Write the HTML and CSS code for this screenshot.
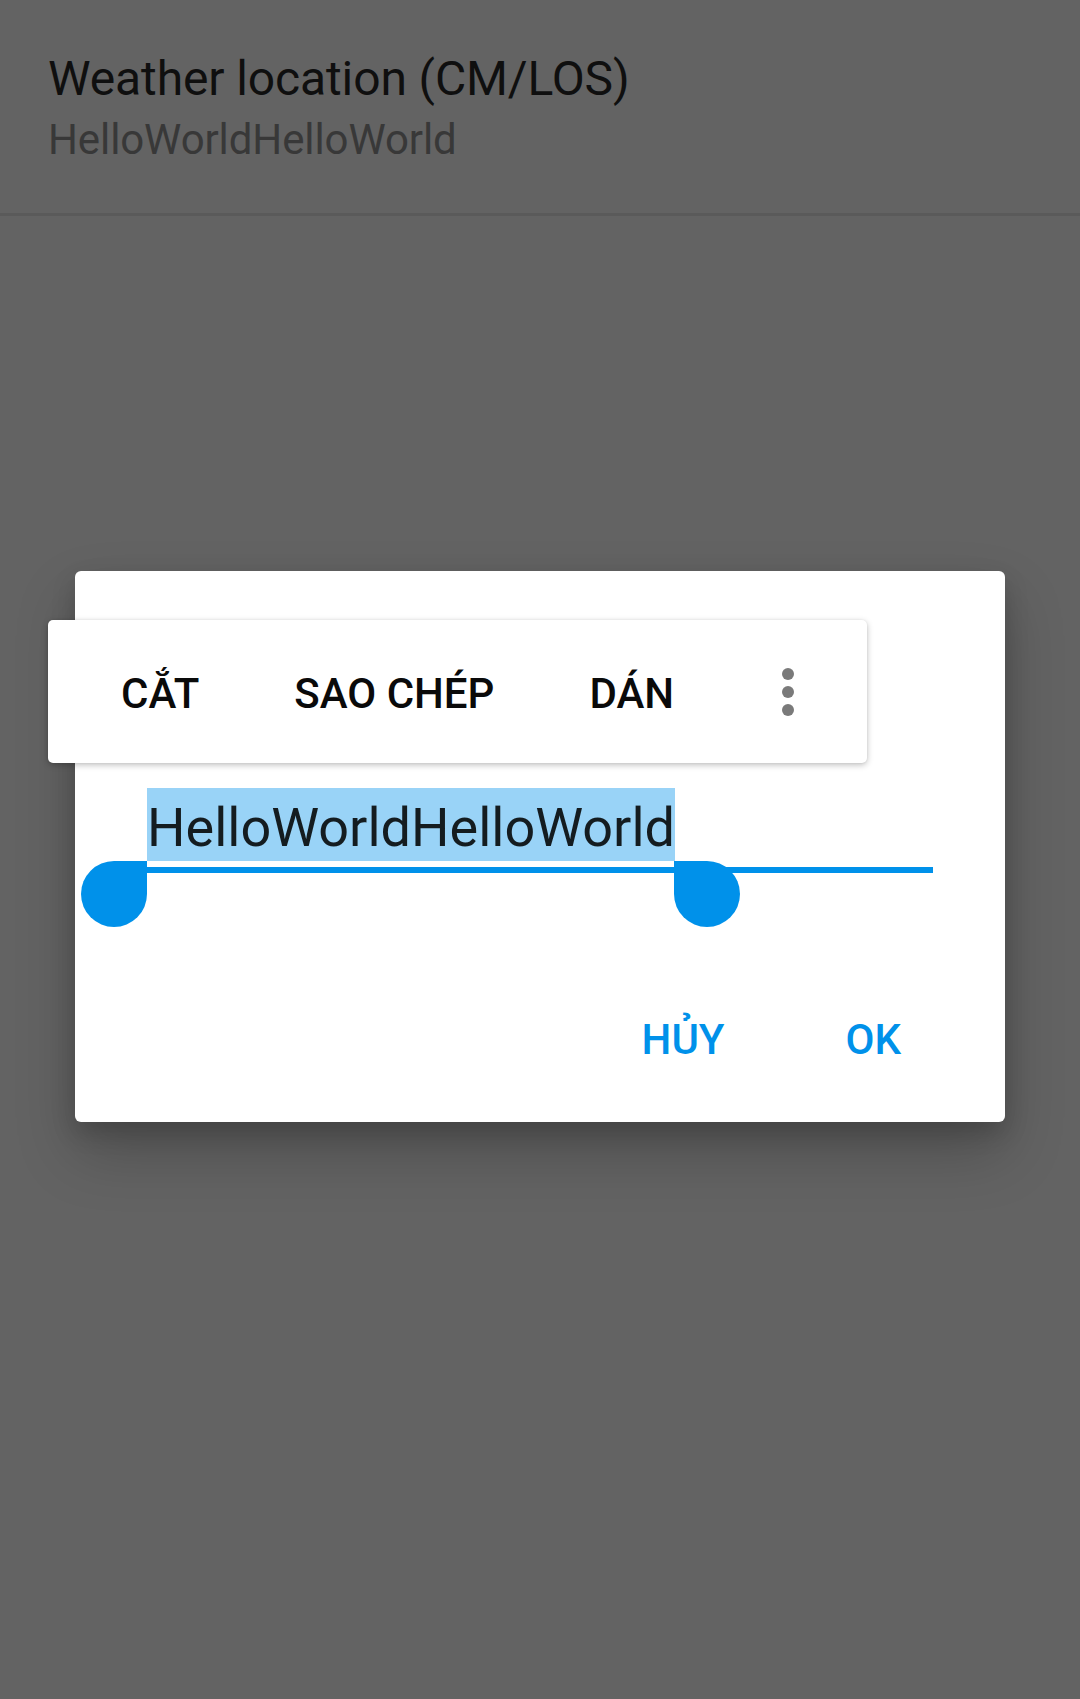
FILE: index.html
```html
<!DOCTYPE html>
<html lang="vi">
<head>
<meta charset="utf-8">
<title>Weather location</title>
<link rel="stylesheet" href="styles.css">
</head>
<body>
  <div class="screen">
    <div class="pref">
      <div class="pref-title">Weather location (CM/LOS)</div>
      <div class="pref-summary">HelloWorldHelloWorld</div>
    </div>

    <div class="dialog">
      <div class="field">
        <span class="selection">HelloWorldHelloWorld</span>
      </div>
      <div class="handle handle-left"></div>
      <div class="handle handle-right"></div>
      <div class="actions">
        <div class="action">HỦY</div>
        <div class="action">OK</div>
      </div>
    </div>

    <div class="toolbar">
      <div class="tb-item">CẮT</div>
      <div class="tb-item">SAO CHÉP</div>
      <div class="tb-item">DÁN</div>
      <div class="tb-more">
        <svg width="72" height="72" viewBox="0 0 72 72">
          <circle cx="36" cy="18" r="6" fill="#7a7a7a"/>
          <circle cx="36" cy="36" r="6" fill="#7a7a7a"/>
          <circle cx="36" cy="54" r="6" fill="#7a7a7a"/>
        </svg>
      </div>
    </div>
  </div>
</body>
</html>
```

FILE: styles.css
```css
html, body {
  margin: 0;
  padding: 0;
}

body {
  background: #636363;
  font-family: Roboto, "Noto Sans", sans-serif;
}

.screen {
  position: relative;
  width: 1080px;
  height: 1699px;
  overflow: hidden;
  background: #636363;
}

.pref {
  box-sizing: border-box;
  height: 216px;
  padding: 51px 49px 0 48px;
  border-bottom: 3px solid #5a5a5a;
}

.pref-title {
  font-size: 48px;
  line-height: 56px;
  letter-spacing: -0.12px;
  color: #0f0f0f;
}

.pref-summary {
  margin-top: 8px;
  font-size: 42px;
  line-height: 50px;
  letter-spacing: -0.1px;
  color: #383838;
}

.dialog {
  position: absolute;
  left: 75px;
  top: 571px;
  width: 930px;
  height: 551px;
  background: #ffffff;
  border-radius: 6px;
  box-shadow: 0 30px 60px rgba(0, 0, 0, 0.22), 0 10px 24px rgba(0, 0, 0, 0.16);
  display: flex;
  flex-direction: column;
}

.field {
  margin: 217px 72px 0 60px;
  padding-left: 12px;
  padding-bottom: 6px;
  border-bottom: 6px solid #0091ea;
  font-size: 54px;
  line-height: 0;
}

.selection {
  display: inline-block;
  background: #99d3f7;
  color: rgba(0, 0, 0, 0.87);
  line-height: 63px;
  padding-top: 8px;
  padding-bottom: 2px;
}

.handle {
  position: absolute;
  top: 290px;
  width: 66px;
  height: 66px;
  background: #0091ea;
  border-radius: 50%;
}

.handle-left {
  left: 6px;
  border-top-right-radius: 0;
}

.handle-right {
  left: 599px;
  border-top-left-radius: 0;
}

.actions {
  margin-top: auto;
  display: flex;
  justify-content: flex-end;
  gap: 17px;
  padding: 0 52px 58px 0;
}

.action {
  padding: 0 52px;
  font-size: 42px;
  line-height: 49px;
  font-weight: 500;
  color: #0091ea;
}

.toolbar {
  position: absolute;
  left: 48px;
  top: 620px;
  width: 819px;
  height: 143px;
  box-sizing: border-box;
  padding: 4px 13px 0 25.5px;
  background: #ffffff;
  border-radius: 5px;
  box-shadow: 0 2px 6px rgba(0, 0, 0, 0.25), 0 0 2px rgba(0, 0, 0, 0.08);
  display: flex;
  align-items: center;
}

.tb-item {
  padding: 0 47.5px;
  font-size: 42px;
  line-height: 49px;
  font-weight: 500;
  color: #0a0a0a;
  white-space: nowrap;
}

.tb-more {
  margin-left: auto;
  width: 134px;
  height: 72px;
  margin-top: -4px;
  display: flex;
  justify-content: center;
  align-items: center;
}

.tb-more svg {
  display: block;
}
```
